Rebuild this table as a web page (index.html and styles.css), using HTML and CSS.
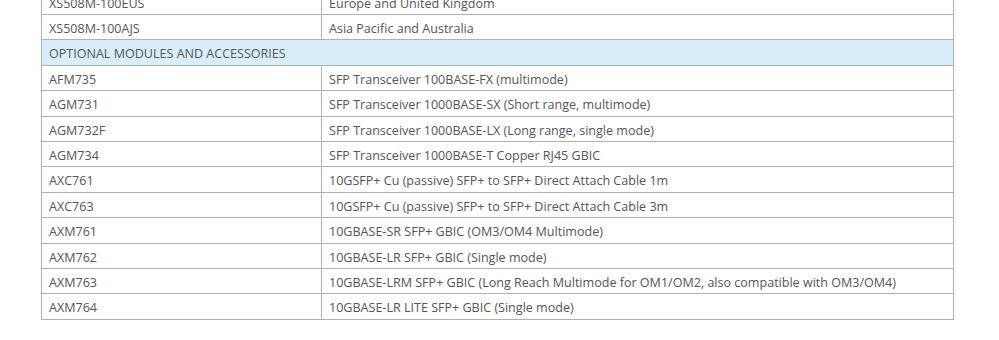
FILE: index.html
```html
<!DOCTYPE html>
<html>
<head>
<meta charset="utf-8">
<link rel="stylesheet" href="styles.css">
</head>
<body>
<div class="wrap">
<table class="spec">
<colgroup><col class="c1"><col class="c2"></colgroup>
<tbody>
<tr><td>XS508M-100EUS</td><td>Europe and United Kingdom</td></tr>
<tr><td>XS508M-100AJS</td><td>Asia Pacific and Australia</td></tr>
<tr class="section"><td colspan="2">OPTIONAL MODULES AND ACCESSORIES</td></tr>
<tr><td>AFM735</td><td>SFP Transceiver 100BASE-FX (multimode)</td></tr>
<tr><td>AGM731</td><td>SFP Transceiver 1000BASE-SX (Short range, multimode)</td></tr>
<tr><td>AGM732F</td><td>SFP Transceiver 1000BASE-LX (Long range, single mode)</td></tr>
<tr><td>AGM734</td><td>SFP Transceiver 1000BASE-T Copper RJ45 GBIC</td></tr>
<tr><td>AXC761</td><td>10GSFP+ Cu (passive) SFP+ to SFP+ Direct Attach Cable 1m</td></tr>
<tr><td>AXC763</td><td>10GSFP+ Cu (passive) SFP+ to SFP+ Direct Attach Cable 3m</td></tr>
<tr><td>AXM761</td><td>10GBASE-SR SFP+ GBIC (OM3/OM4 Multimode)</td></tr>
<tr><td>AXM762</td><td>10GBASE-LR SFP+ GBIC (Single mode)</td></tr>
<tr><td>AXM763</td><td>10GBASE-LRM SFP+ GBIC (Long Reach Multimode for OM1/OM2, also compatible with OM3/OM4)</td></tr>
<tr><td>AXM764</td><td>10GBASE-LR LITE SFP+ GBIC (Single mode)</td></tr>
</tbody>
</table>
</div>
</body>
</html>
```
FILE: styles.css
```css
html, body {
  margin: 0;
  padding: 0;
  background: #ffffff;
}
.wrap {
  padding: 0 45px 0 41px;
  margin-top: -11.4px;
}
.spec {
  width: 913px;
  border-collapse: collapse;
  table-layout: fixed;
  font-family: "Open Sans", "Noto Sans", sans-serif;
  font-size: 12.55px;
  line-height: 18.4px;
  color: #555555;
}
.c1 { width: 280px; }
.spec td {
  border: 1px solid #b3b0ae;
  padding: 5px 7px 1px 7px;
  white-space: nowrap;
  overflow: hidden;
}
.section td {
  background: #d9eefa;
}
```
